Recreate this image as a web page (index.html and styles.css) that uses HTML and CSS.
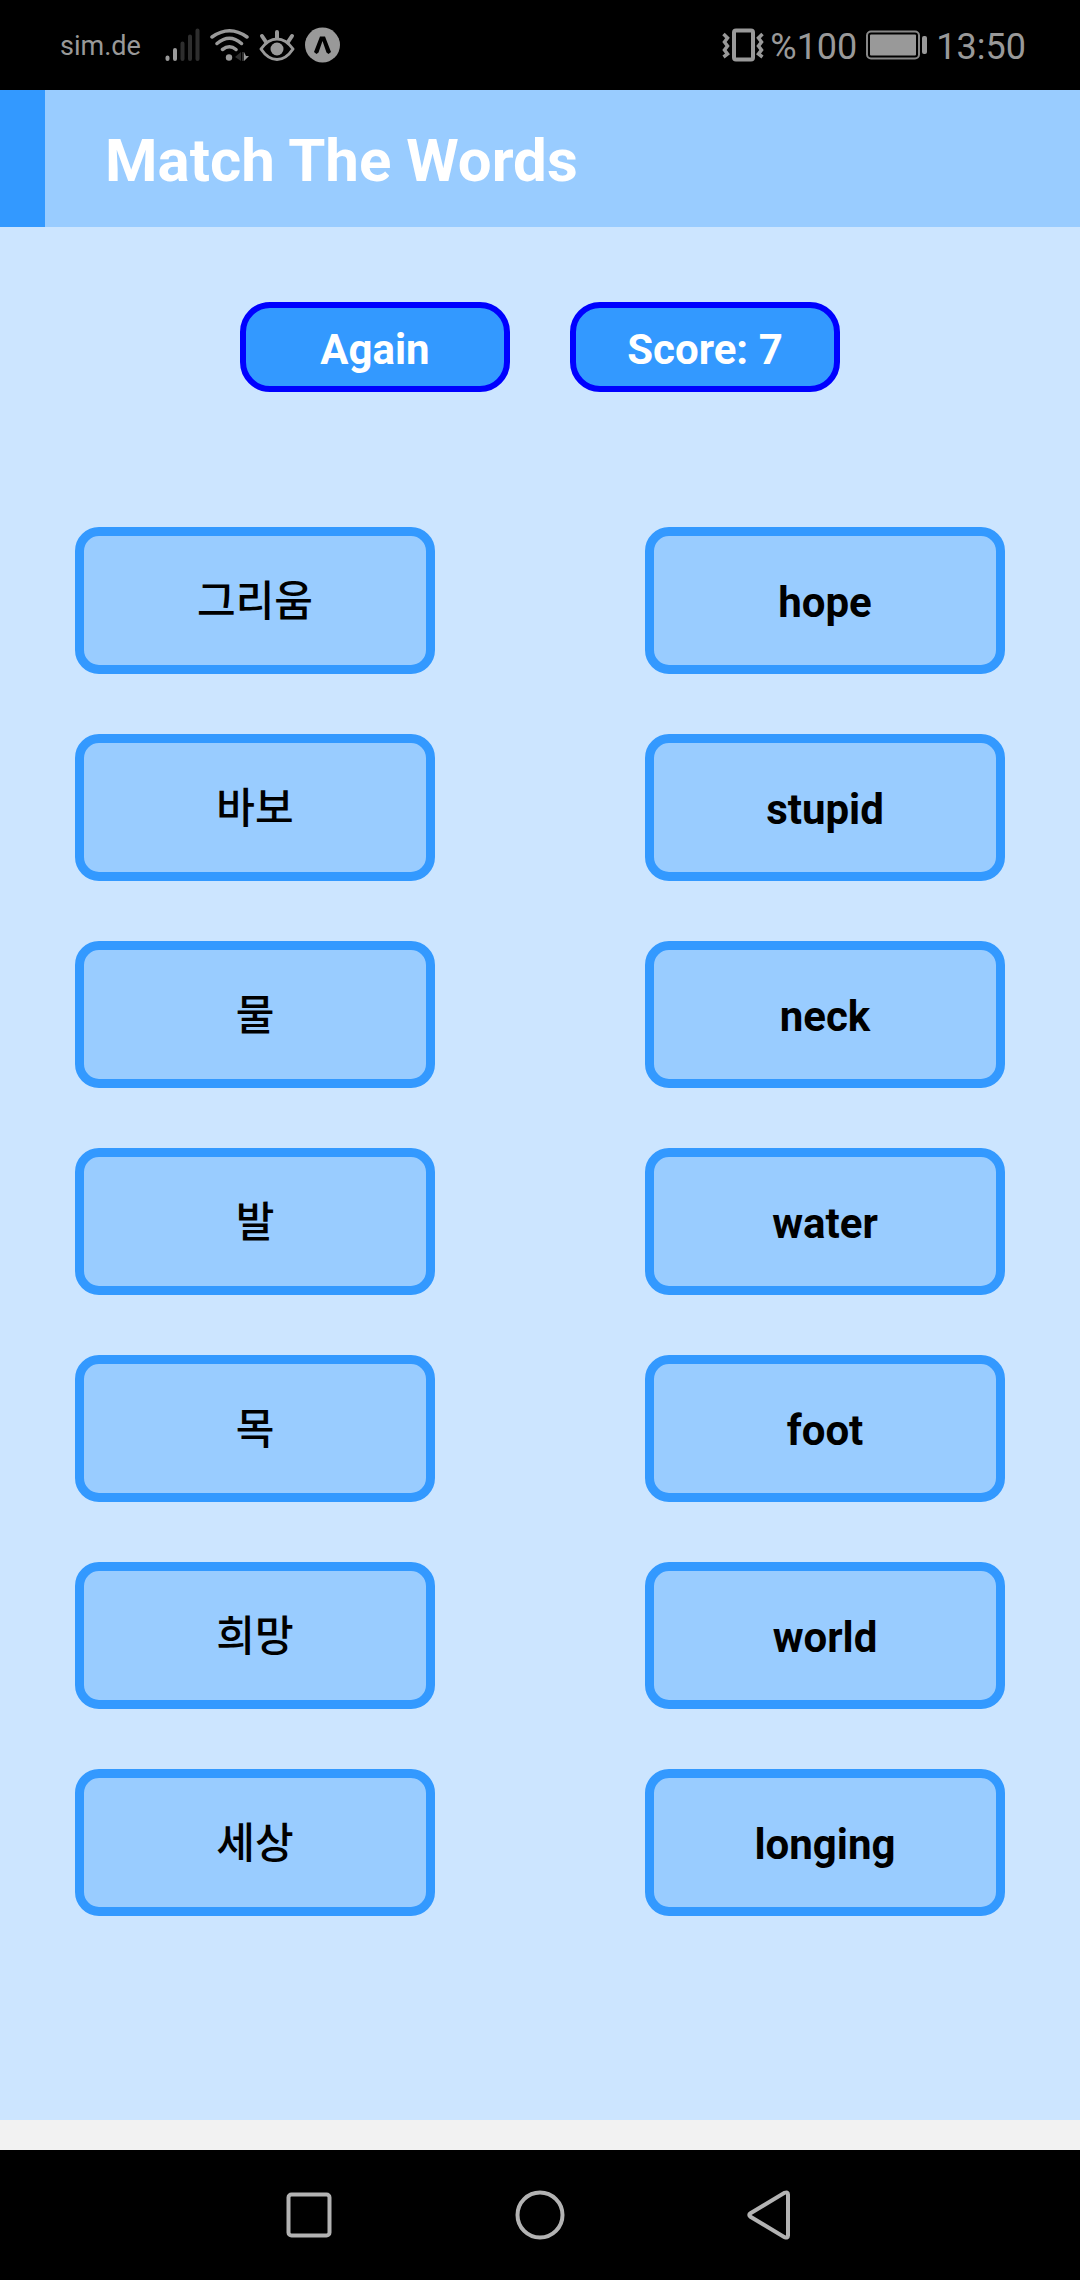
FILE: index.html
```html
<!DOCTYPE html>
<html lang="en">
<head>
<meta charset="utf-8">
<meta name="viewport" content="width=device-width, initial-scale=1">
<title>Match The Words</title>
<link rel="stylesheet" href="styles.css">
</head>
<body>
<div class="status">
  <div class="status-group status-left">
    <span class="carrier">sim.de</span>
    <svg width="35" height="34" viewBox="0 0 35 34" stroke-width="4" stroke-linecap="round" aria-hidden="true">
      <path stroke="#999" d="M2.5 29.5v1.500M10 22v9"/>
      <path stroke="#2e2e2e" d="M17.500 15.500v15.500M25 8.500v22.500M32.500 2.500v28.500"/>
    </svg>
    <svg width="39" height="34" viewBox="0 0 39 34" fill="none" stroke="#999" stroke-width="3.500" stroke-linecap="round" aria-hidden="true">
      <path d="M2 9Q19.500-3.500 37 9M7 15.500Q19.500 5 31.500 15.500M12.500 21.500Q19.500 16 26 21.500"/>
      <circle cx="19" cy="29.500" r="3.200" fill="#999" stroke="none"/>
      <path d="M25 29l6-5v9z" fill="#2e2e2e" stroke="none"/>
      <path d="M32 24h2v9h-2z" fill="#2e2e2e" stroke="none"/>
      <path d="M34 24l2 4h3l-5 5z" fill="#999" stroke="none"/>
    </svg>
    <svg width="36" height="34" viewBox="0 0 36 34" fill="none" stroke="#999" stroke-width="3" stroke-linecap="round" aria-hidden="true">
      <path d="M2 21Q9 11 18 11T34 21Q27 31.500 18 31.500T2 21z" stroke-linejoin="round"/>
      <circle cx="18" cy="21" r="6.500" fill="#999" stroke="none"/>
      <path stroke-width="4" d="M18 4v6M3 8l4 6M33 8l-4 6"/>
    </svg>
    <svg width="35" height="36" viewBox="0 0 35 36" aria-hidden="true">
      <circle cx="17.500" cy="18" r="17.500" fill="#999"/>
      <path d="M15 9.500h5L26 25l-2.500 2-2-1.500-4-11.500-4 11.500-2 1.500L9 25z"/>
    </svg>
  </div>
  <div class="status-group status-right">
    <svg width="42" height="34" viewBox="0 0 42 34" fill="none" stroke="#999" aria-hidden="true">
      <rect x="12" y="2.500" width="19" height="29" rx="2" stroke-width="4"/>
      <path stroke-width="3.500" d="M1.500 6l4 4-3 4 3 4-3 4 3 4-4 3M40.500 6l-4 4 3 4-3 4 3 4-3 4 4 3"/>
    </svg>
    <span>%100</span>
    <svg class="battery" width="61" height="30" viewBox="0 0 61 30" fill="#999" aria-hidden="true">
      <rect x="1" y="1.500" width="52" height="27" rx="4" fill="none" stroke="#888" stroke-width="2"/>
      <rect x="4" y="4.500" width="46" height="21" rx="1"/>
      <rect x="56" y="6" width="5" height="18" rx="2"/>
    </svg>
    <span>13:50</span>
  </div>
</div>
<header class="header">
  <h1>Match The Words</h1>
</header>
<main class="game">
  <div class="actions">
    <button class="action" type="button">Again</button>
    <output class="action">Score: 7</output>
  </div>
  <div class="words">
    <button class="word korean" type="button" lang="ko">그리움</button>
    <button class="word" type="button">hope</button>
    <button class="word korean" type="button" lang="ko">바보</button>
    <button class="word" type="button">stupid</button>
    <button class="word korean" type="button" lang="ko">물</button>
    <button class="word" type="button">neck</button>
    <button class="word korean" type="button" lang="ko">발</button>
    <button class="word" type="button">water</button>
    <button class="word korean" type="button" lang="ko">목</button>
    <button class="word" type="button">foot</button>
    <button class="word korean" type="button" lang="ko">희망</button>
    <button class="word" type="button">world</button>
    <button class="word korean" type="button" lang="ko">세상</button>
    <button class="word" type="button">longing</button>
  </div>
</main>
<nav class="nav" aria-label="System navigation">
  <button type="button" aria-label="Recent apps">
    <svg width="50" height="50" viewBox="0 0 50 50"><rect x="4.500" y="4.500" width="41" height="41" rx="3"/></svg>
  </button>
  <button type="button" aria-label="Home">
    <svg width="50" height="50" viewBox="0 0 50 50"><circle cx="25" cy="25" r="22.500"/></svg>
  </button>
  <button type="button" aria-label="Back">
    <svg width="50" height="50" viewBox="0 0 50 50"><path d="M4.500 23.200L38.500 2.800Q42 1.500 42 4.500V45.500Q42 48.500 38.500 47.200L4.500 26.800Q2 25 4.500 23.200z"/></svg>
  </button>
</nav>
</body>
</html>
```
FILE: styles.css
```css
* {
  box-sizing: border-box;
}

body {
  margin: 0;
  min-height: 100vh;
  display: flex;
  flex-direction: column;
  background: #f2f2f2;
  font-family: Roboto, "Noto Sans CJK KR", sans-serif;
}

button {
  font-family: inherit;
  cursor: pointer;
}

.status {
  display: flex;
  justify-content: space-between;
  align-items: center;
  height: 90px;
  padding: 0 54px 0 60px;
  background: #000;
  color: #999;
  font-size: 36px;
  line-height: 42px;
}

.status-group {
  display: flex;
  align-items: center;
  gap: 10px;
}

.status-right {
  gap: 6px;
}

.status span {
  padding-top: 3px;
}

.battery {
  margin: 0 3px;
}

.status .carrier {
  margin-right: 14px;
  padding-top: 2px;
  font-size: 27px;
}

.header {
  padding: 36px 60px 31px;
  border-left: 45px solid #39f;
  background: #9cf;
}

.header h1 {
  margin: 0;
  color: #fff;
  font-size: 60px;
  line-height: 70px;
}

.game {
  flex: 1;
  margin-bottom: 30px;
  padding: 75px;
  background: #cce5ff;
}

.actions {
  display: flex;
  justify-content: center;
  gap: 60px;
  margin-bottom: 135px;
}

.action,
.word {
  display: flex;
  justify-content: center;
  align-items: center;
  padding: 5px 0 0;
  font-size: 42px;
  font-weight: 700;
  line-height: 50px;
}

.action {
  width: 270px;
  height: 90px;
  border: 6px solid #00f;
  border-radius: 30px;
  background: #39f;
  color: #fff;
}

.words {
  display: grid;
  grid-template-columns: repeat(2, 360px);
  justify-content: space-between;
  row-gap: 60px;
}

.word {
  height: 147px;
  border: 9px solid #39f;
  border-radius: 24px;
  background: #9cf;
  color: #000;
}

.korean {
  padding: 0 0 5px;
  font-family: "Noto Sans CJK KR", sans-serif;
  font-weight: 500;
}

.nav {
  display: grid;
  grid-template-columns: repeat(3, 231px);
  justify-content: center;
  height: 130px;
  background: #000;
}

.nav button {
  display: flex;
  justify-content: center;
  align-items: center;
  border: 0;
  background: none;
}

.nav svg {
  fill: none;
  stroke: #b3b3b3;
  stroke-width: 4;
}
```
